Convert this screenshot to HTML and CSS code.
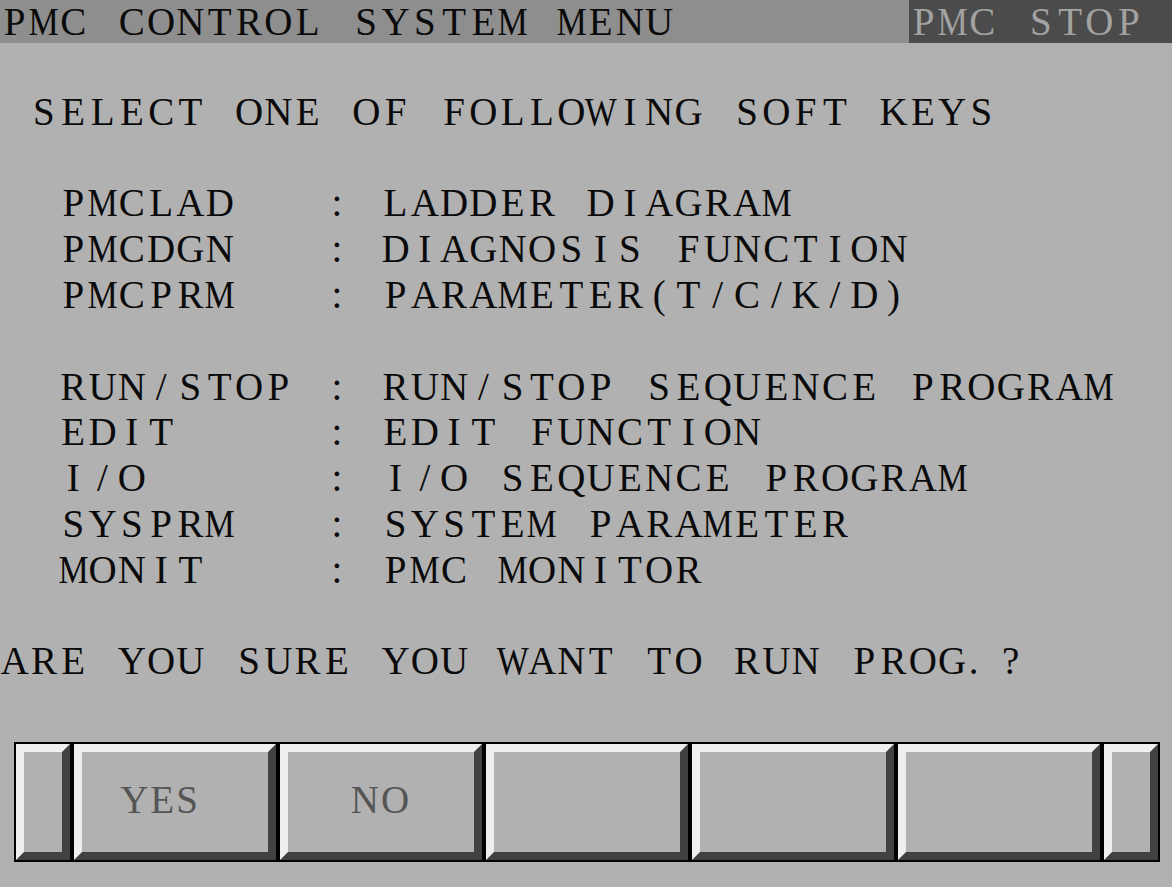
FILE: index.html
```html
<!DOCTYPE html>
<html lang="en">
<head>
    <meta charset="UTF-8">
    <meta name="viewport" content="width=device-width, initial-scale=1.0">
    <title>PMC Control System Menu</title>
    <link rel="stylesheet" href="styles.css">
</head>
<body>
    <div class="screen">
        <div class="title-bar">
            <div class="cells">PMC CONTROL SYSTEM MENU</div>
            <div class="status cells">PMC STOP</div>
        </div>
        <div class="page">
            <div class="row"></div>
            <div class="row cells"> SELECT ONE OF FOLLOWING SOFT KEYS</div>
            <div class="row"></div>
            <div class="row cells">  PMCLAD   : LADDER DIAGRAM</div>
            <div class="row cells">  PMCDGN   : DIAGNOSIS FUNCTION</div>
            <div class="row cells">  PMCPRM   : PARAMETER(T/C/K/D)</div>
            <div class="row"></div>
            <div class="row cells">  RUN/STOP : RUN/STOP SEQUENCE PROGRAM</div>
            <div class="row cells">  EDIT     : EDIT FUNCTION</div>
            <div class="row cells">  I/O      : I/O SEQUENCE PROGRAM</div>
            <div class="row cells">  SYSPRM   : SYSTEM PARAMETER</div>
            <div class="row cells">  MONIT    : PMC MONITOR</div>
            <div class="row"></div>
            <div class="row cells">ARE YOU SURE YOU WANT TO RUN PROG.?</div>
        </div>
        <div class="softkeys">
            <div class="key key-small"></div>
            <div class="key"><span class="key-label key-label-yes">YES</span></div>
            <div class="key"><span class="key-label">NO</span></div>
            <div class="key"></div>
            <div class="key"></div>
            <div class="key"></div>
            <div class="key key-small"></div>
        </div>
    </div>
    <script>
        // split each text row into fixed-width character cells (CRT grid)
        document.querySelectorAll('.cells').forEach(el => {
            const text = el.textContent;
            el.textContent = '';
            for (const ch of text) {
                const span = document.createElement('span');
                span.className = 'cell';
                if (ch === 'M' || ch === 'W') span.className += ' cell-wide';
                if (ch === '.') span.className += ' cell-left';
                span.textContent = ch;
                el.appendChild(span);
            }
        });
    </script>
</body>
</html>
```

FILE: styles.css
```css
body {
    margin: 0;
    padding: 0;
    background-color: #b1b1b1;
    font-family: "Liberation Serif", "Times New Roman", serif;
    font-size: 39px;
    color: #0a0a0a;
}
.screen {
    width: 1172px;
    height: 887px;
}
.title-bar {
    height: 43px;
    background-color: #8e8e8e;
    display: flex;
    justify-content: space-between;
}
.title-bar .cells {
    display: flex;
    height: 43px;
    line-height: 43px;
}
.title-bar .status {
    width: 263px;
    background-color: #4b4b4b;
    color: #a2a2a2;
}
.cells {
    white-space: pre;
}
.cell {
    display: inline-flex;
    justify-content: center;
    width: 29.3px;
    flex: none;
}
.cell-wide {
    transform: scaleX(0.87);
}
.cell-left {
    justify-content: flex-start;
    text-indent: 2px;
}
.row {
    display: flex;
    height: 45.8px;
    line-height: 45.8px;
}
.softkeys {
    display: flex;
    gap: 4px;
    margin: 58px 12px 0 14px;
    padding: 2px;
    background-color: #000;
}
.key {
    width: 202px;
    height: 116px;
    box-sizing: border-box;
    border: 8px solid;
    border-color: #efefef #414141 #414141 #efefef;
    background-color: #b1b1b1;
    display: flex;
    align-items: center;
    justify-content: center;
}
.key-small {
    width: 54px;
}
.key-label {
    color: #555;
    letter-spacing: 2px;
    padding-bottom: 6px;
}
.key-label-yes {
    padding-right: 30px;
}
```
